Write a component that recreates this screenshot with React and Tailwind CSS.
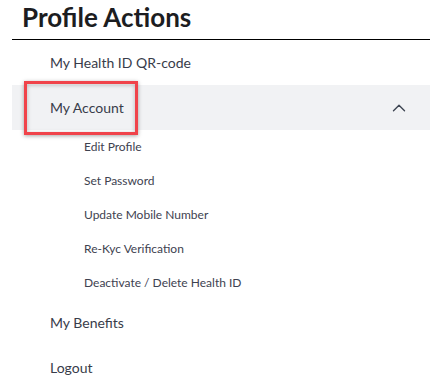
import { ChevronUp } from "lucide-react";

const subItems = [
  "Edit Profile",
  "Set Password",
  "Update Mobile Number",
  "Re-Kyc Verification",
  "Deactivate / Delete Health ID",
];

export default function App() {
  return (
    <div className="w-[435px] h-[381px] overflow-hidden bg-white pl-[12px] pr-[5px] font-['Lato',sans-serif] text-[#383c4a]">
      {/* ─── HEADER ─── */}
      <h1 className="h-[39px] pl-[10px] pt-[1px] text-[26px] leading-[32px] font-bold text-[#1c1d21]">
        Profile Actions
      </h1>
      <div className="h-[1px] bg-black" />

      {/* ─── MENU ─── */}
      <div className="flex h-[45px] items-center pl-[38px] text-[14px]">My Health ID QR-code</div>

      <div className="relative flex h-[45px] items-center justify-between bg-[#f1f2f4] pl-[38px] pr-[20px] text-[14px]">
        <span>My Account</span>
        <ChevronUp className="h-[22px] w-[22px] text-[#3d4451]" strokeWidth={1.5} />
        <div className="absolute left-[12px] top-[-4px] h-[54px] w-[114px] border-[3px] border-[#f0434a] shadow-[0_1px_4px_rgba(0,0,0,0.35),inset_0_1px_4px_rgba(0,0,0,0.25)]" />
      </div>

      <div className="pl-[72px] text-[12px] text-[#3e4250]">
        {subItems.map((item) => (
          <div key={item} className="flex h-[34px] items-center">
            {item}
          </div>
        ))}
      </div>

      <div className="flex h-[45px] items-center pl-[38px] text-[14px]">My Benefits</div>
      <div className="flex h-[45px] items-center pl-[38px] text-[14px]">Logout</div>
    </div>
  );
}
